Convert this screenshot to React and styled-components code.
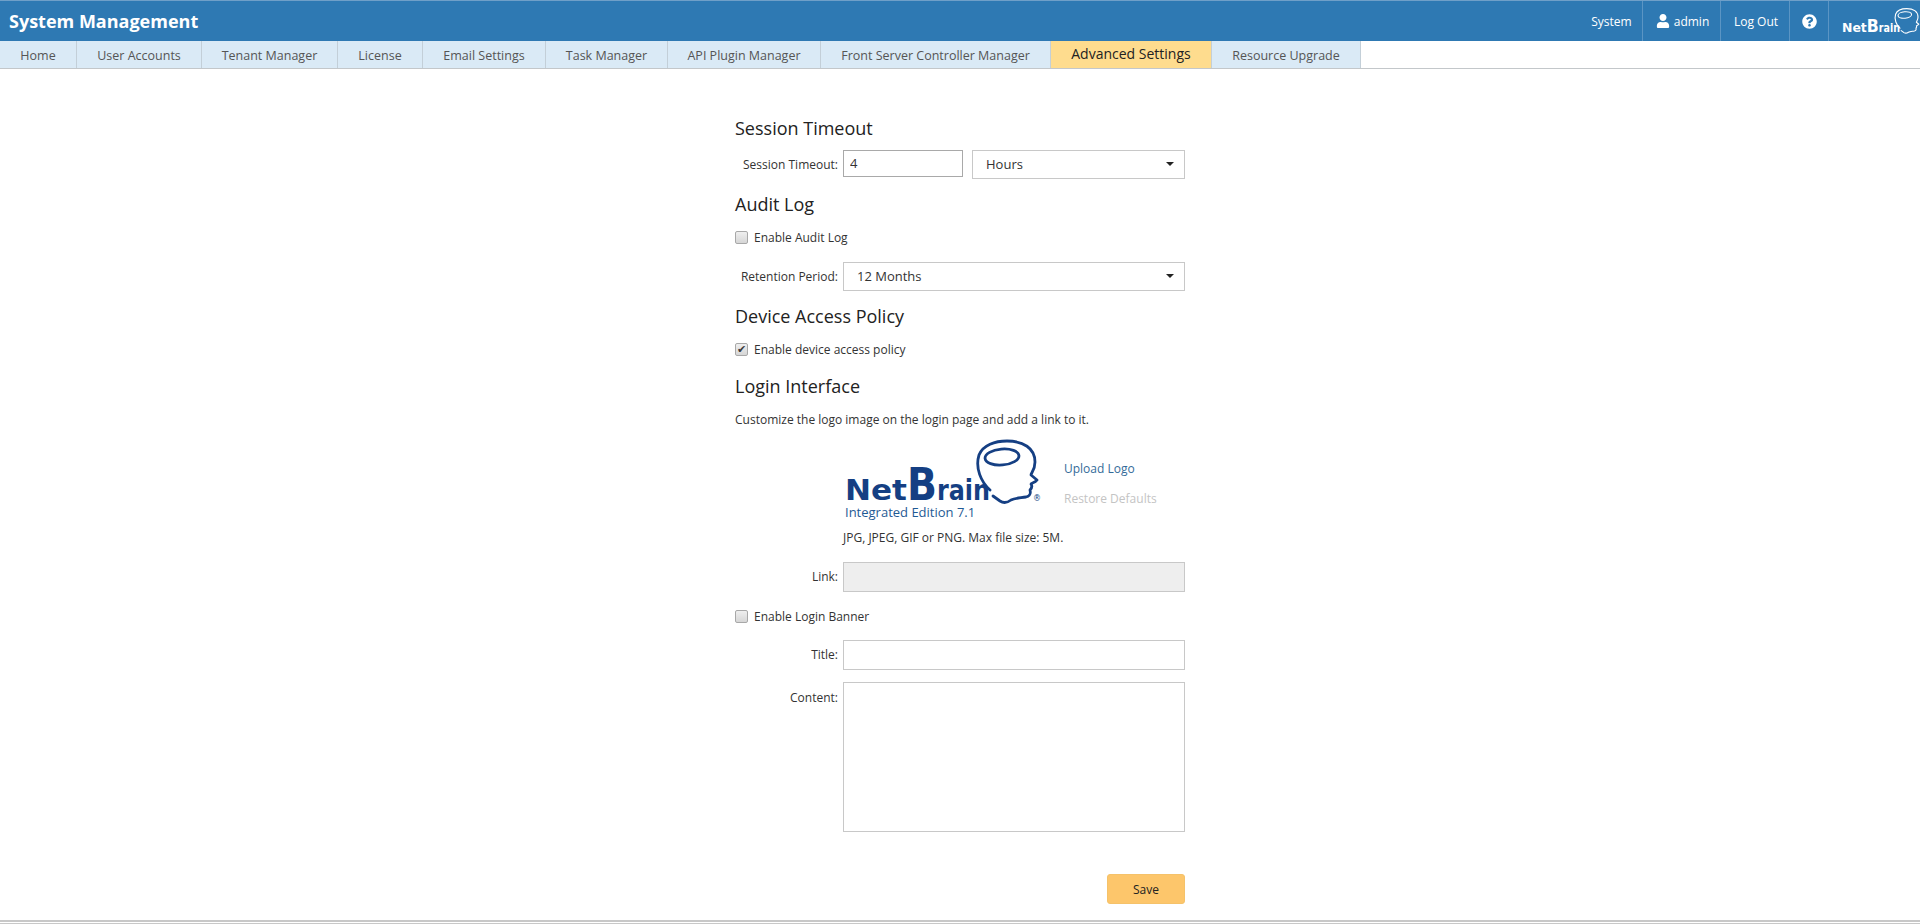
import React from 'react'
import styled, { createGlobalStyle } from 'styled-components'
import { FaUser, FaQuestionCircle } from 'react-icons/fa'

const tabs = [
  ['Home', 77],
  ['User Accounts', 125],
  ['Tenant Manager', 136],
  ['License', 85],
  ['Email Settings', 123],
  ['Task Manager', 122],
  ['API Plugin Manager', 153],
  ['Front Server Controller Manager', 230],
  ['Advanced Settings', 161],
  ['Resource Upgrade', 149],
]

function BrandLogo({ color, width, height, mark }) {
  return (
    <LogoSvg width={width} height={height} viewBox="0 0 200 64">
      <g fill={color} fontFamily="DejaVu Sans, sans-serif" fontWeight="700">
        <text x="0" y="60" fontSize="29" textLength="62" lengthAdjust="spacingAndGlyphs">Net</text>
        <text x="62" y="60" fontSize="45" textLength="30" lengthAdjust="spacingAndGlyphs">B</text>
        <text x="92" y="60" fontSize="29" textLength="53" lengthAdjust="spacingAndGlyphs">rain</text>
        {mark && <text x="188" y="61" fontSize="8" fontWeight="400">®</text>}
      </g>
      <g fill="none" stroke={color} strokeWidth="2.8" strokeLinecap="round" strokeLinejoin="round">
        <path d="M145 50C136 42 130 28 134 15C138 5 150 1 162 1C178 1 190 8 190 22C190 30 186 33 186 35L192 40C190 43 186 43 186 44C188 47 186 49 185 50C186 54 185 56 181 57C175 58 170 58 166 60C162 63 158 63 155 61L148 56" />
        <ellipse cx="157" cy="17" rx="17" ry="8" transform="rotate(-5 157 17)" />
      </g>
    </LogoSvg>
  )
}

function App() {
  return (
    <Page>
      <GlobalStyle />
      <TopBar>
        <AppTitle>System Management</AppTitle>
        <TopNav>
          <TopItem $width={70} $lead={8}>System</TopItem>
          <TopItem $width={78} $lead={2}><FaUser size={14} />admin</TopItem>
          <TopItem $width={69} $lead={2}>Log Out</TopItem>
          <TopItem $width={39}><FaQuestionCircle size={15} /></TopItem>
          <TopLogo>
            <BrandLogo color="#fff" width={80} height={26} />
          </TopLogo>
        </TopNav>
      </TopBar>
      <TabBar>
        {tabs.map(([name, width]) => (
          <Tab key={name} $width={width} $active={name === 'Advanced Settings'}>{name}</Tab>
        ))}
      </TabBar>
      <Form>
        <Heading $top={47}>Session Timeout</Heading>
        <Row $top={10}>
          <Label>Session Timeout:</Label>
          <NumberInput defaultValue="4" />
          <Select $width={213}><span>Hours</span><Caret /></Select>
        </Row>

        <Heading $top={13}>Audit Log</Heading>
        <CheckRow $top={11}><Box />Enable Audit Log</CheckRow>
        <Row $top={15}>
          <Label>Retention Period:</Label>
          <Select><span>12 Months</span><Caret /></Select>
        </Row>

        <Heading $top={13}>Device Access Policy</Heading>
        <CheckRow $top={11}><Box>{'\u2714'}</Box>Enable device access policy</CheckRow>

        <Heading $top={15}>Login Interface</Heading>
        <Hint>Customize the logo image on the login page and add a link to it.</Hint>
        <LogoRow>
          <LogoBlock>
            <BrandLogo color="#153f83" width={200} height={64} mark />
            <Edition>Integrated Edition 7.1</Edition>
          </LogoBlock>
          <LogoActions>
            <LogoAction>Upload Logo</LogoAction>
            <LogoAction $muted>Restore Defaults</LogoAction>
          </LogoActions>
        </LogoRow>
        <FileNote>JPG, JPEG, GIF or PNG. Max file size: 5M.</FileNote>
        <Row $top={14}>
          <Label>Link:</Label>
          <TextInput disabled />
        </Row>
        <CheckRow $top={14}><Box />Enable Login Banner</CheckRow>
        <Row $top={14}>
          <Label>Title:</Label>
          <TextInput />
        </Row>
        <Row $top={12}>
          <Label $high>Content:</Label>
          <TextArea />
        </Row>
        <Actions>
          <SaveButton>Save</SaveButton>
        </Actions>
      </Form>
      <FootLine />
    </Page>
  )
}

export default App

const GlobalStyle = createGlobalStyle`
  html, body {
    margin: 0;
    padding: 0;
    background: #fff;
    font-family: "Open Sans", sans-serif;
    font-size: 12px;
    color: #222;
  }
  * {
    box-sizing: border-box;
  }
`
const LogoSvg = styled.svg`
  display: block;
  overflow: visible;
`
const Page = styled.div`
  height: 924px;
  overflow: hidden;
  display: flex;
  flex-direction: column;
`
const TopBar = styled.div`
  height: 41px;
  flex: none;
  background: #2e79b3;
  border-top: 1px solid #6f9fc8;
  display: flex;
  align-items: center;
  justify-content: space-between;
  color: #fff;
`
const AppTitle = styled.div`
  padding-left: 9px;
  font-size: 18px;
  font-weight: 700;
`
const TopNav = styled.div`
  display: flex;
  height: 100%;
  align-items: stretch;
`
const TopItem = styled.div`
  width: ${p => p.$width}px;
  padding-left: ${p => p.$lead || 0}px;
  display: flex;
  align-items: center;
  justify-content: center;
  gap: 4px;
  font-size: 12px;
  border-right: 1px solid #5b95c4;
`
const TopLogo = styled.div`
  width: 91px;
  padding: 7px 0 0 13px;
  overflow: hidden;
`
const TabBar = styled.div`
  height: 28px;
  flex: none;
  display: flex;
  border-bottom: 1px solid #c3c7ca;
`
const Tab = styled.div`
  width: ${p => p.$width}px;
  display: flex;
  align-items: center;
  justify-content: center;
  font-size: ${p => (p.$active ? '14px' : '12.5px')};
  color: ${p => (p.$active ? '#222' : '#555')};
  background: ${p => (p.$active ? '#fedc8e' : '#daeaf6')};
  border-right: 1px solid #c3cfd8;
  padding: ${p => (p.$active ? '0 0 2px' : '2px 0 0')};
`
const Form = styled.div`
  width: 450px;
  margin: 0 auto;
  flex: 1;
`
const Heading = styled.h2`
  margin: ${p => p.$top}px 0 0;
  height: 24px;
  line-height: 24px;
  font-size: 18px;
  font-weight: 400;
  color: #222;
`
const Row = styled.div`
  margin-top: ${p => p.$top}px;
  display: flex;
`
const Label = styled.label`
  width: 103px;
  margin-right: 5px;
  flex: none;
  text-align: right;
  line-height: ${p => (p.$high ? '32px' : '29px')};
  color: #333;
`
const NumberInput = styled.input`
  width: 120px;
  height: 27px;
  margin-right: 9px;
  padding: 0 6px 1px;
  border: 1px solid #a9a9a9;
  font: 13px "Open Sans", sans-serif;
  color: #333;
  outline: none;
`
const Select = styled.div`
  width: ${p => (p.$width ? `${p.$width}px` : '342px')};
  height: 29px;
  display: flex;
  align-items: center;
  justify-content: space-between;
  padding: 0 10px 1px 13px;
  border: 1px solid #c8c8c8;
  font-size: 13px;
  color: #333;
`
const Caret = styled.i`
  width: 0;
  height: 0;
  border-left: 4px solid transparent;
  border-right: 4px solid transparent;
  border-top: 4px solid #222;
`
const CheckRow = styled.label`
  margin-top: ${p => p.$top}px;
  height: 20px;
  display: flex;
  align-items: center;
  gap: 6px;
  color: #333;
`
const Box = styled.span`
  width: 13px;
  height: 13px;
  flex: none;
  display: flex;
  align-items: center;
  justify-content: center;
  border: 1px solid #a8a8a8;
  border-radius: 2px;
  background: linear-gradient(#efefef, #d6d6d6);
  font-family: "DejaVu Sans", sans-serif;
  font-size: 11px;
  line-height: 1;
  color: #3a3a3a;
`
const Hint = styled.p`
  margin: 12px 0 0;
  height: 20px;
  line-height: 20px;
  color: #333;
`
const LogoRow = styled.div`
  margin-top: 10px;
  margin-left: 110px;
  display: flex;
`
const LogoBlock = styled.div`
  width: 219px;
  height: 88px;
  flex: none;
`
const Edition = styled.div`
  font-size: 13px;
  line-height: 14px;
  color: #1f5a94;
  margin-top: 1px;
`
const LogoActions = styled.div`
  padding-top: 20px;
  display: flex;
  flex-direction: column;
  gap: 13px;
`
const LogoAction = styled.a`
  line-height: 17px;
  color: ${p => (p.$muted ? '#c4c4c4' : '#346b99')};
`
const FileNote = styled.p`
  margin: 0 0 0 108px;
  height: 20px;
  line-height: 20px;
  color: #333;
`
const TextInput = styled.input`
  width: 342px;
  height: 30px;
  border: 1px solid #c8c8c8;
  background: #fff;
  outline: none;
  &:disabled {
    background: #eee;
  }
`
const TextArea = styled.textarea`
  width: 342px;
  height: 150px;
  display: block;
  border: 1px solid #c8c8c8;
  outline: none;
  resize: none;
`
const Actions = styled.div`
  margin-top: 42px;
  display: flex;
  justify-content: flex-end;
`
const SaveButton = styled.button`
  width: 78px;
  height: 30px;
  border: 1px solid #f5c26a;
  border-radius: 3px;
  background: #fdc66b;
  font: 12px "Open Sans", sans-serif;
  color: #222;
`
const FootLine = styled.div`
  height: 4px;
  flex: none;
  border-top: 2px solid #c8c8c8;
  border-bottom: 1px solid #c8c8c8;
`
